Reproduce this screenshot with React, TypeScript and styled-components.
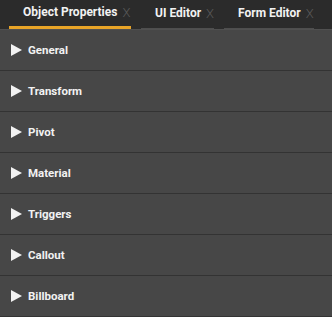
import React, { useState } from "react";
import styled, { createGlobalStyle } from "styled-components";

const GlobalStyle = createGlobalStyle`
  html, body {
    margin: 0;
    padding: 0;
    background: #474747;
  }
  body {
    font-family: Roboto, "Liberation Sans", Arial, sans-serif;
    width: 332px;
    height: 317px;
    overflow: hidden;
  }
`;

const Panel = styled.div`
  display: flex;
  flex-direction: column;
  width: 332px;
  height: 317px;
  background: #474747;
`;

const TabBar = styled.div`
  display: flex;
  gap: 10px;
  height: 29px;
  padding-left: 9px;
  background: #2b2b2b;
  border-bottom: 1px solid #505050;
  box-sizing: content-box;
`;

const Tab = styled.div<{ $active?: boolean; $width: number }>`
  display: flex;
  align-items: center;
  gap: 5px;
  flex-shrink: 0;
  width: ${({ $width }) => $width}px;
  height: 29px;
  padding-left: 14px;
  padding-bottom: 3px;
  box-sizing: border-box;
  white-space: nowrap;
  border-bottom: ${({ $active }) =>
    $active ? "3px solid #e8a427" : "1px solid #4e4e4e"};
  margin-bottom: ${({ $active }) => ($active ? "0" : "1px")};
  cursor: pointer;
`;

const TabLabel = styled.span`
  color: #f2f2f2;
  font-size: 12px;
  font-weight: 700;
`;

const TabClose = styled.span`
  color: #5a5a5a;
  font-size: 13px;
  font-weight: 300;
  margin-top: 1px;
`;

const List = styled.div`
  display: flex;
  flex-direction: column;
`;

const Row = styled.div`
  display: flex;
  align-items: center;
  gap: 6px;
  height: 40px;
  padding-left: 11px;
  border-bottom: 1px solid #333333;
  cursor: pointer;
`;

const Arrow = styled.span`
  width: 0;
  height: 0;
  border-top: 6px solid transparent;
  border-bottom: 6px solid transparent;
  border-left: 11px solid #f2f2f2;
`;

const RowLabel = styled.span`
  color: #f2f2f2;
  font-size: 11.5px;
  font-weight: 700;
`;

const tabs = [
  { label: "Object Properties", width: 122 },
  { label: "UI Editor", width: 73 },
  { label: "Form Editor", width: 90 },
];

const sections = [
  "General",
  "Transform",
  "Pivot",
  "Material",
  "Triggers",
  "Callout",
  "Billboard",
];

const App: React.FunctionComponent = () => {
  const [active, setActive] = useState(0);

  return (
    <Panel>
      <GlobalStyle />
      <TabBar>
        {tabs.map((tab, i) => (
          <Tab
            key={tab.label}
            $width={tab.width}
            $active={i === active}
            onClick={() => setActive(i)}
          >
            <TabLabel>{tab.label}</TabLabel>
            <TabClose>X</TabClose>
          </Tab>
        ))}
      </TabBar>
      <List>
        {sections.map(name => (
          <Row key={name}>
            <Arrow />
            <RowLabel>{name}</RowLabel>
          </Row>
        ))}
      </List>
    </Panel>
  );
};

export default App;
